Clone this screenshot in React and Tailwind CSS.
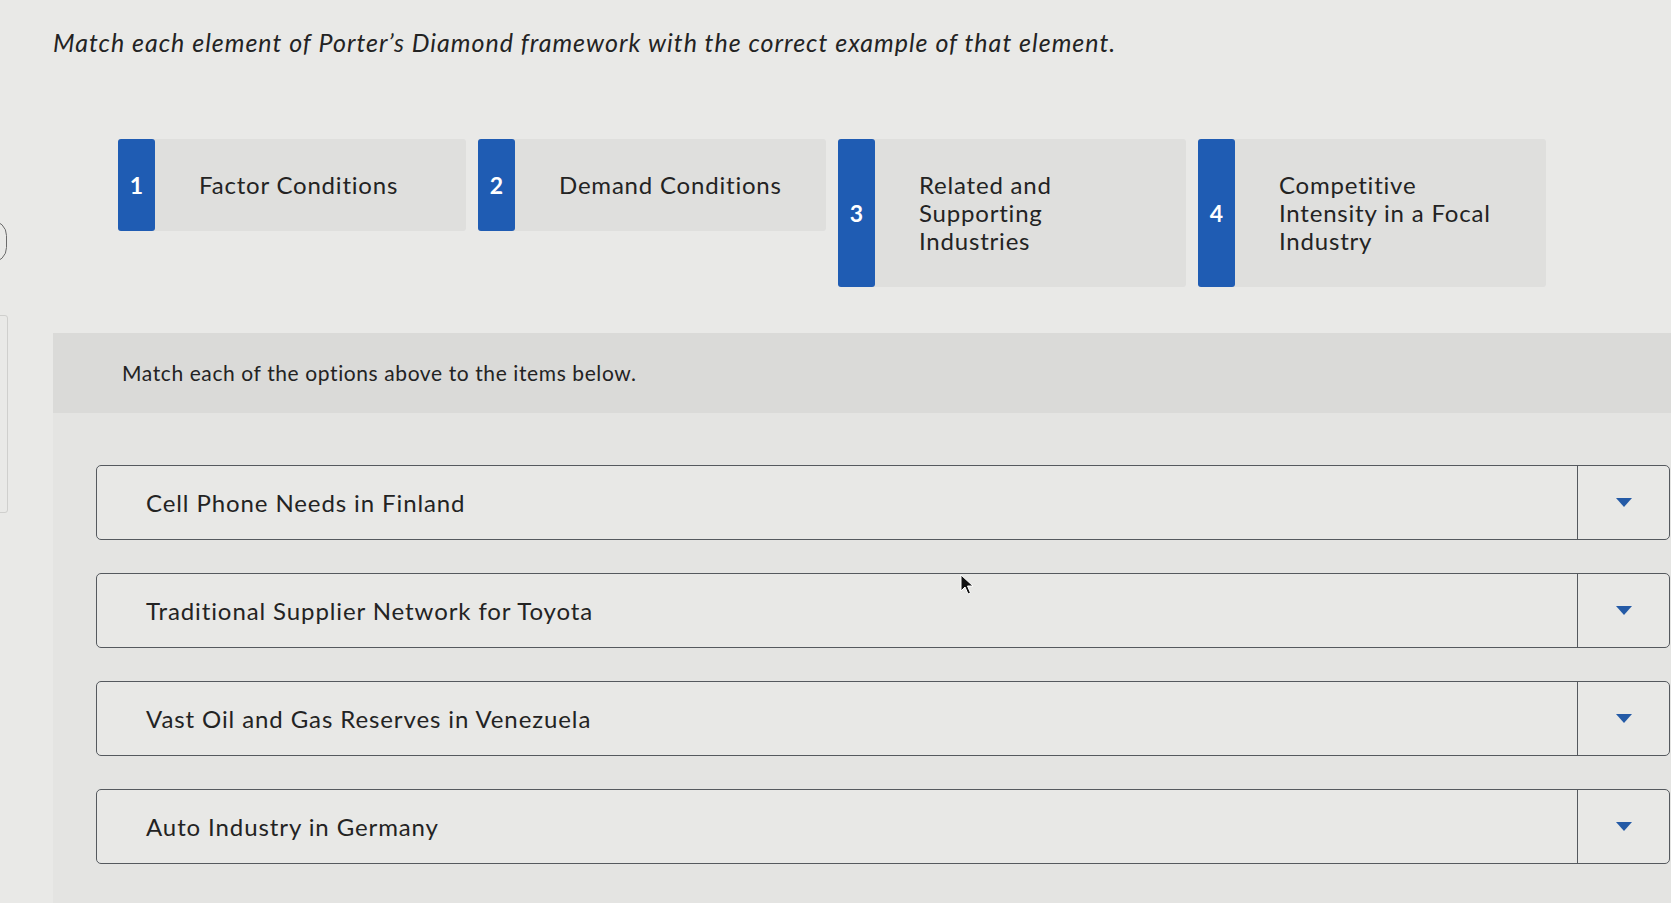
import React from "react";

const options = [
  { n: "1", lines: ["Factor Conditions"] },
  { n: "2", lines: ["Demand Conditions"] },
  { n: "3", lines: ["Related and", "Supporting", "Industries"] },
  { n: "4", lines: ["Competitive", "Intensity in a Focal", "Industry"] },
];

const items = [
  "Cell Phone Needs in Finland",
  "Traditional Supplier Network for Toyota",
  "Vast Oil and Gas Reserves in Venezuela",
  "Auto Industry in Germany",
];

function Arrow() {
  return (
    <svg width="16" height="9" viewBox="0 0 16 9">
      <path d="M0 0 L16 0 L8 9 Z" fill="#245aa6" />
    </svg>
  );
}

export default function App() {
  return (
    <div className="relative w-[1671px] h-[903px] overflow-hidden bg-[#e9e9e7] text-[#232323] font-['Lato',sans-serif]">
      {/* left edge fragments */}
      <div className="absolute left-[-24px] top-[220px] w-[31px] h-[43px] rounded-full border border-[#6b6b6b]" />
      <div className="absolute left-[-20px] top-[315px] w-[28px] h-[198px] rounded-[3px] border border-[#cfcfcd]" />

      <div className="pl-[53px] pt-[28px]">
        <p className="italic text-[25px] leading-[28px] tracking-[1px]">
          Match each element of Porter’s Diamond framework with the correct example of that element.
        </p>
      </div>

      <div className="flex items-start gap-[12px] pl-[118px] mt-[83px]">
        {options.map((o) => (
          <div key={o.n} className="flex w-[348px] bg-[#dfdfdd] rounded-[3px]">
            <div className="w-[37px] shrink-0 bg-[#1f5cb3] rounded-[3px] flex items-center justify-center text-white font-bold text-[23px]">
              {o.n}
            </div>
            <div className="pl-[44px] py-[32px] text-[24px] leading-[28px] tracking-[0.8px]">
              {o.lines.map((l) => (
                <div key={l} className="whitespace-nowrap">{l}</div>
              ))}
            </div>
          </div>
        ))}
      </div>

      <div className="ml-[53px] mt-[46px] w-[1700px] h-[600px] bg-[#e4e4e2]">
        <div className="h-[80px] bg-[#dadad8] flex items-center pl-[69px] text-[21px] tracking-[0.6px]">
          Match each of the options above to the items below.
        </div>
        <div className="pl-[43px] pt-[52px] flex flex-col gap-[33px]">
          {items.map((t) => (
            <div
              key={t}
              className="flex w-[1574px] h-[75px] rounded-[5px] border-[1.5px] border-[#55595e] bg-[#e8e8e6]"
            >
              <div className="flex-1 flex items-center pl-[49px] text-[24px] tracking-[0.9px]">{t}</div>
              <div className="w-[92px] border-l-[1.5px] border-[#55595e] flex items-center justify-center">
                <Arrow />
              </div>
            </div>
          ))}
        </div>
      </div>

      {/* mouse cursor */}
      <svg className="absolute left-[960px] top-[574px]" width="15" height="22" viewBox="0 0 15 22">
        <path d="M1 1 L1 17 L5 13 L8 20 L10.5 19 L7.5 12 L13 12 Z" fill="#111" stroke="#fff" strokeWidth="1" />
      </svg>
    </div>
  );
}
